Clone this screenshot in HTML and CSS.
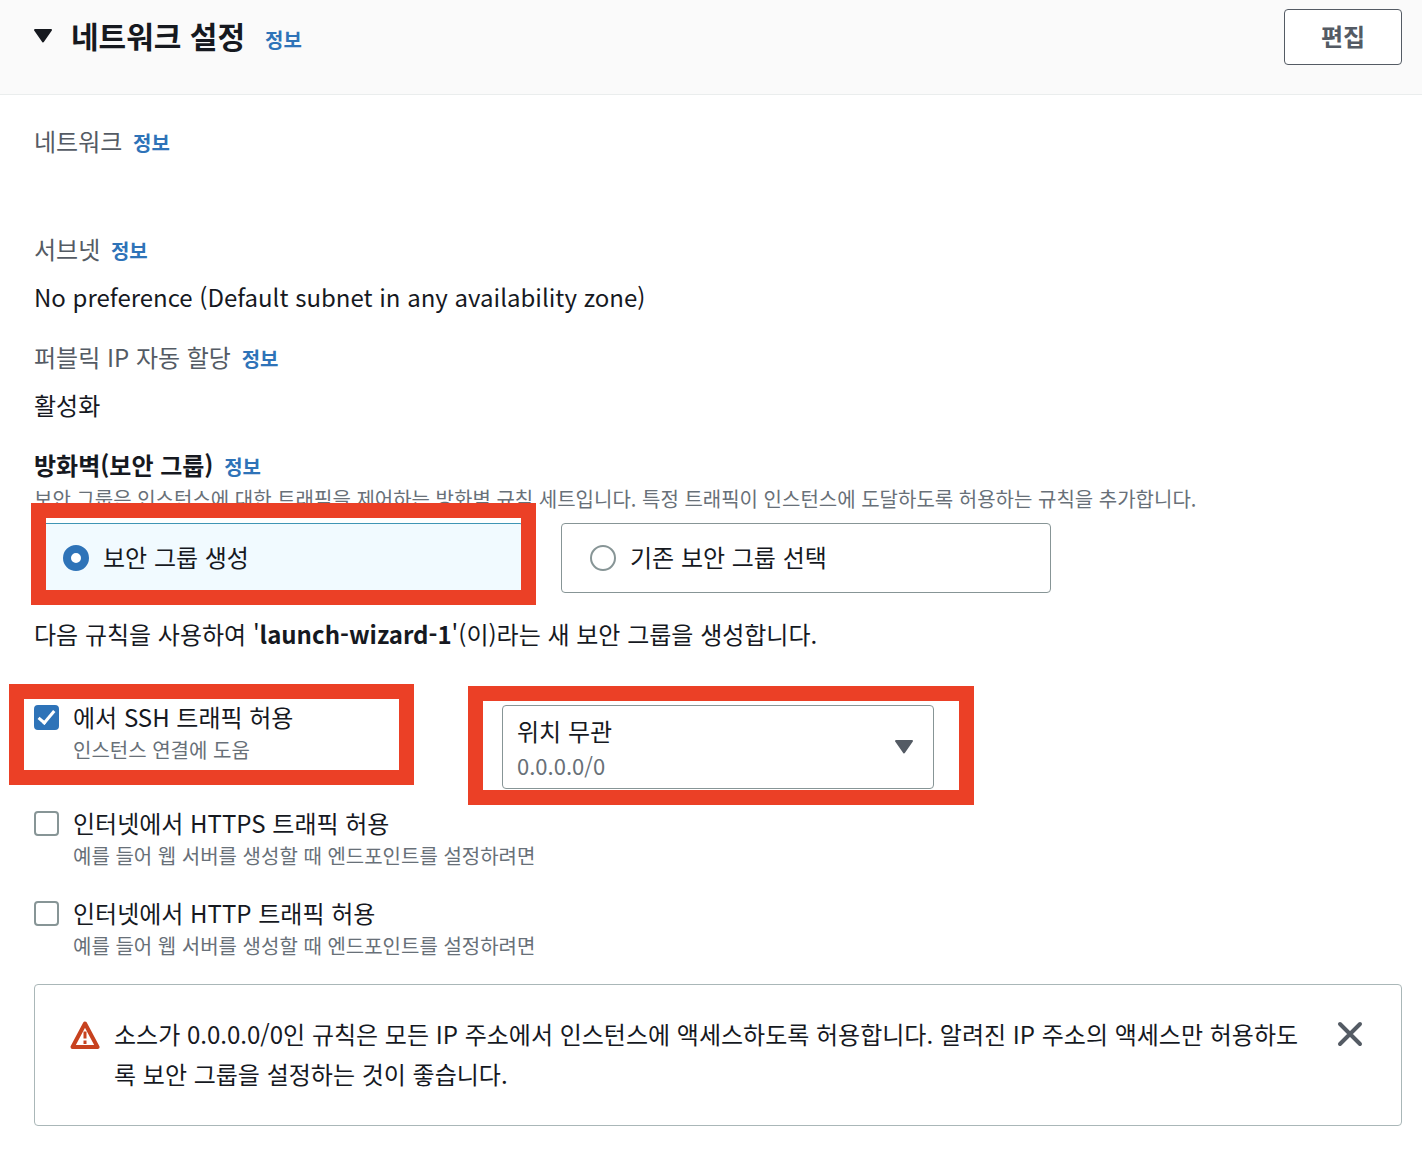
FILE: index.html
```html
<!DOCTYPE html>
<html lang="ko">
<head>
  <meta charset="utf-8">
  <title>네트워크 설정</title>
  <link rel="stylesheet" href="styles.css">
</head>

<body>
  <header class="panel-header">
    <button class="toggle" type="button" aria-label="네트워크 설정" aria-expanded="true">
      <svg class="caret" viewBox="0 0 20 16"><path d="M2 2h16L10 13.5z"/></svg>
    </button>
    <h2>네트워크 설정</h2>
    <a class="info" href="#">정보</a>
    <button class="edit" type="button">편집</button>
  </header>

  <main class="panel">
    <dl class="fields">
      <div class="field">
        <dt>네트워크 <a class="info" href="#">정보</a></dt>
        <dd></dd>
      </div>
      <div class="field">
        <dt>서브넷 <a class="info" href="#">정보</a></dt>
        <dd>No preference (Default subnet in any availability zone)</dd>
      </div>
      <div class="field">
        <dt>퍼블릭 IP 자동 할당 <a class="info" href="#">정보</a></dt>
        <dd>활성화</dd>
      </div>
    </dl>

    <section>
      <h3>방화벽(보안 그룹) <a class="info" href="#">정보</a></h3>
      <p class="hint">보안 그룹은 인스턴스에 대한 트래픽을 제어하는 방화벽 규칙 세트입니다. 특정 트래픽이 인스턴스에 도달하도록 허용하는 규칙을 추가합니다.</p>

      <div class="tiles">
        <div class="marked">
          <label class="tile selected">
            <input type="radio" name="group" checked>
            <span>보안 그룹 생성</span>
          </label>
          <span class="mark mark-tile"></span>
        </div>
        <label class="tile">
          <input type="radio" name="group">
          <span>기존 보안 그룹 선택</span>
        </label>
      </div>

      <p class="summary">다음 규칙을 사용하여 '<b>launch-wizard-1</b>'(이)라는 새 보안 그룹을 생성합니다.</p>

      <div class="ssh-row">
        <div class="check marked">
          <input type="checkbox" id="ssh" checked>
          <label for="ssh">에서 SSH 트래픽 허용</label>
          <p>인스턴스 연결에 도움</p>
          <span class="mark mark-ssh"></span>
        </div>
        <div class="source marked">
          <select aria-label="소스">
            <option>위치 무관</option>
          </select>
          <span class="cidr">0.0.0.0/0</span>
          <svg class="caret" viewBox="0 0 20 16"><path d="M2 2h16L10 13.5z"/></svg>
          <span class="mark mark-source"></span>
        </div>
      </div>

      <div class="checks">
        <div class="check">
          <input type="checkbox" id="https">
          <label for="https">인터넷에서 HTTPS 트래픽 허용</label>
          <p>예를 들어 웹 서버를 생성할 때 엔드포인트를 설정하려면</p>
        </div>
        <div class="check">
          <input type="checkbox" id="http">
          <label for="http">인터넷에서 HTTP 트래픽 허용</label>
          <p>예를 들어 웹 서버를 생성할 때 엔드포인트를 설정하려면</p>
        </div>
      </div>
    </section>

    <div class="alert" role="alert">
      <svg class="warn" viewBox="0 0 30 30">
        <path class="frame" d="M15 3.5 27.5 27h-25z"/>
        <path class="bang" d="M15 11.5v7M15 20.5v3.5"/>
      </svg>
      <p>소스가 0.0.0.0/0인 규칙은 모든 IP 주소에서 인스턴스에 액세스하도록 허용합니다. 알려진 IP 주소의 액세스만 허용하도록 보안 그룹을 설정하는 것이 좋습니다.</p>
      <button class="close" type="button" aria-label="닫기">
        <svg viewBox="0 0 26 26"><path d="M3 3l20 20M23 3L3 23"/></svg>
      </button>
    </div>
  </main>
</body>
</html>
```

FILE: styles.css
```css
*,
*::before,
*::after {
  box-sizing: border-box;
}

body {
  margin: 0;
  background: #fff;
  color: #16191f;
  font: 24px/36px "Noto Sans CJK KR", sans-serif;
}

h2, h3, p, dl, dd {
  margin: 0;
}

button, select {
  font: inherit;
  color: inherit;
}

.info {
  color: #2e73b8;
  font-size: 20px;
  font-weight: bold;
  text-decoration: none;
}

/* header */

.panel-header {
  display: flex;
  align-items: baseline;
  height: 95px;
  padding: 9px 20px 0 33px;
  background: #fafafa;
  border-bottom: 1px solid #eaeded;
}

.toggle {
  width: 20px;
  padding: 0;
  border: 0;
  background: none;
}

.caret {
  width: 20px;
  height: 16px;
  fill: currentColor;
  stroke: currentColor;
  stroke-width: 2;
  stroke-linejoin: round;
}

.toggle .caret {
  display: block;
  margin-bottom: 4px;
}

.panel-header h2 {
  margin: 0 20px 0 18px;
  font-size: 30px;
  line-height: 52px;
}

.edit {
  align-self: flex-start;
  width: 118px;
  height: 56px;
  margin-left: auto;
  padding: 0 0 2px;
  border: 1px solid #545b64;
  border-radius: 4px;
  background: #fff;
  color: #545b64;
  font-weight: bold;
}

/* fields */

.panel {
  padding: 22px 20px 24px 34px;
}

.field {
  margin-bottom: 12px;
}

.field dt,
.field dd,
h3 {
  height: 48px;
  line-height: 48px;
}

.field dt {
  color: #545b64;
}

dt .info,
h3 .info {
  margin-left: 4px;
}

h3 {
  font-size: 24px;
}

.hint {
  color: #687078;
  font-size: 20px;
  line-height: 20px;
}

/* security group choice */

.tiles {
  display: flex;
  gap: 37px;
  margin: 14px 0 23px;
}

.tile {
  display: flex;
  align-items: center;
  gap: 14px;
  width: 490px;
  height: 70px;
  padding: 0 28px;
  border: 1px solid #879596;
  border-radius: 4px;
}

.tile span {
  padding-bottom: 2px;
}

.tile.selected {
  border-color: #3f95b5;
  background: #f1faff;
}

input {
  appearance: none;
  flex: none;
  width: 26px;
  height: 26px;
  margin: 0;
  border: 2px solid #879596;
  background: #fff;
}

input[type=radio] {
  border-radius: 50%;
}

input[type=radio]:checked {
  border: 8px solid #2e73b8;
}

input[type=checkbox] {
  width: 25px;
  height: 25px;
  border-radius: 4px;
}

input[type=checkbox]:checked {
  border-color: #2e73b8;
  background: #2e73b8;
}

input[type=checkbox]:checked::after {
  content: "";
  display: block;
  width: 9px;
  height: 17px;
  margin: 0 0 0 6px;
  border: solid #fff;
  border-width: 0 3px 3px 0;
  transform: rotate(40deg);
}

/* rules */

.ssh-row {
  display: flex;
  gap: 103px;
  margin: 47px 0 16px;
}

.ssh-row .check {
  width: 365px;
}

.check {
  display: grid;
  grid-template-columns: 25px 1fr;
  grid-template-rows: 36px 30px;
  column-gap: 14px;
  align-items: center;
  align-content: start;
}

.check p {
  grid-column: 2;
  color: #687078;
  font-size: 20px;
  line-height: 30px;
}

.checks {
  display: grid;
  gap: 24px;
}

.source {
  width: 432px;
  height: 84px;
  margin-top: 6px;
}

.source select {
  appearance: none;
  width: 100%;
  height: 100%;
  padding: 0 60px 32px 14px;
  border: 1px solid #879596;
  border-radius: 4px;
  background: #fff;
}

.source .cidr {
  position: absolute;
  left: 15px;
  bottom: 9px;
  color: #687078;
  font-size: 22px;
  line-height: 30px;
  pointer-events: none;
}

.source .caret {
  position: absolute;
  right: 20px;
  top: 34px;
  color: #545b64;
  pointer-events: none;
}

/* red marker frames */

.marked {
  position: relative;
}

.mark {
  position: absolute;
  border: 15px solid #eb4026;
  pointer-events: none;
}

.mark-tile {
  inset: -20px -12px -12px -3px;
}

.mark-ssh {
  inset: -15px -15px auto -25px;
  height: 101px;
}

.mark-source {
  inset: -19px -40px -16px -34px;
}

/* warning */

.alert {
  display: flex;
  align-items: flex-start;
  margin-top: 23px;
  padding: 29px 38px 31px 35px;
  border: 1px solid #aab7b8;
  border-radius: 4px;
}

.alert p {
  flex: 1;
  line-height: 40px;
}

.warn {
  flex: none;
  width: 30px;
  height: 30px;
  margin: 6px 14px 0 0;
  fill: none;
  stroke: #c7421f;
}

.warn .frame {
  stroke-width: 4;
  stroke-linejoin: round;
}

.warn .bang {
  stroke-width: 3;
}

.close {
  width: 26px;
  height: 26px;
  margin: 7px 0 0 32px;
  padding: 0;
  border: 0;
  background: none;
}

.close svg {
  display: block;
  fill: none;
  stroke: #545b64;
  stroke-width: 4;
  stroke-linecap: round;
}
```
